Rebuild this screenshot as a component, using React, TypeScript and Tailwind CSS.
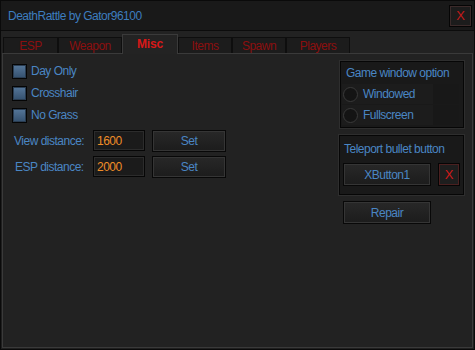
import React from "react";

const blue = "text-[#4a86c4]";

function Btn({ children, className = "" }: { children: React.ReactNode; className?: string }) {
  return (
    <div
      className={`flex items-center justify-center border border-[#080808] bg-gradient-to-b from-[#282828] to-[#1c1c1c] shadow-[inset_0_0_0_1px_#353535] ${blue} ${className}`}
    >
      {children}
    </div>
  );
}

function Check({ label }: { label: string }) {
  return (
    <div className="flex h-[22px] items-center">
      <div className="h-[15px] w-[15px] border border-[#050505] bg-gradient-to-b from-[#56779a] to-[#34506e] shadow-[inset_0_0_0_1px_#2a3d52]" />
      <span className={`ml-[4px] ${blue}`}>{label}</span>
    </div>
  );
}

function Radio({ label }: { label: string }) {
  return (
    <div className="flex h-[20px] items-center">
      <div className="flex h-full w-[91px] items-center bg-[#1c1c1c]">
        <div className="ml-[1px] h-[15px] w-[15px] rounded-full border border-[#3a3a3a] bg-[#141414]" />
        <span className={`ml-[5px] ${blue}`}>{label}</span>
      </div>
      <div className="h-full w-[26px] bg-[#181818]" />
    </div>
  );
}

function Tab({ label, w, active = false }: { label: string; w: string; active?: boolean }) {
  if (active) {
    return (
      <div
        className={`relative z-10 flex h-[20px] ${w} items-center justify-center self-end border border-b-0 border-[#3a3a3a] bg-[#232323] text-[#d81818]`}
      >
        <span className="mt-[-1px] font-bold tracking-[-0.2px]">{label}</span>
      </div>
    );
  }
  return (
    <div
      className={`flex h-[17px] ${w} items-center justify-center self-end border border-[#0e0e0e] bg-[#1c1c1c] text-[#8c0f0f]`}
    >
      {label}
    </div>
  );
}

export default function App() {
  return (
    <div
      className="flex h-[350px] w-[475px] flex-col whitespace-nowrap border border-[#0a0a0a] bg-[#1f1f1f] text-[12px] leading-none tracking-[-0.5px]"
      style={{ fontFamily: '"Liberation Sans", Arial, sans-serif' }}
    >
      {/* title bar */}
      <div className="flex h-[30px] items-center justify-between border-b border-[#0c0c0c] bg-[#191919] pl-[7px] pr-[2px]">
        <span className="text-[#3d7dbf]">DeathRattle by Gator96100</span>
        <div className="flex h-[22px] w-[23px] items-center justify-center border border-[#050505] bg-[#1c1c1c] text-[13px] tracking-normal text-[#c41a1a] shadow-[inset_0_0_0_1px_#3b2a2a]">
          X
        </div>
      </div>

      {/* tab strip */}
      <div className="flex h-[23px] items-end bg-[#222222] pl-[2px]">
        <Tab label="ESP" w="w-[55px]" />
        <Tab label="Weapon" w="w-[64px]" />
        <Tab label="Misc" w="w-[56px]" active />
        <Tab label="Items" w="w-[54px]" />
        <Tab label="Spawn" w="w-[54px]" />
        <Tab label="Players" w="w-[64px]" />
      </div>

      {/* content */}
      <div className="mx-[1px] mb-[1px] -mt-px flex flex-1 border border-[#3a3a3a] bg-[#222222]">
        <div className="flex flex-1 flex-col pl-[9px] pt-[6px]">
          <Check label="Day Only" />
          <Check label="Crosshair" />
          <Check label="No Grass" />
          <div className="mt-[4px] flex h-[21px] items-center">
            <span className={`w-[81px] pl-[2px] ${blue}`}>View distance:</span>
            <div className="flex h-[21px] w-[52px] items-center border border-[#060606] bg-[#1b1b1b] pl-[3px] text-[#ef8d28] shadow-[inset_0_0_0_1px_#2c2c2c]">
              1600
            </div>
            <Btn className="ml-[7px] h-[22px] w-[74px]">Set</Btn>
          </div>
          <div className="mt-[5px] flex h-[21px] items-center">
            <span className={`w-[81px] pl-[3px] ${blue}`}>ESP distance:</span>
            <div className="flex h-[21px] w-[52px] items-center border border-[#060606] bg-[#1b1b1b] pl-[3px] text-[#ef8d28] shadow-[inset_0_0_0_1px_#2c2c2c]">
              2000
            </div>
            <Btn className="ml-[7px] h-[22px] w-[74px]">Set</Btn>
          </div>
        </div>

        <div className="mr-[8px] flex w-[125px] flex-col pt-[7px]">
          <div className="ml-[1px] flex h-[67px] flex-col border border-[#060606] bg-[#191919] px-[1px] shadow-[0_0_0_1px_#2e2e2e]">
            <div className={`flex h-[22px] items-center pl-[4px] ${blue}`}>Game window option</div>
            <Radio label="Windowed" />
            <div className="h-[1px]" />
            <Radio label="Fullscreen" />
          </div>
          <div className="mt-[7px] flex h-[60px] flex-col border border-[#060606] bg-[#191919] shadow-[0_0_0_1px_#2e2e2e]">
            <div className={`flex h-[25px] items-center pl-[4px] ${blue}`}>Teleport bullet button</div>
            <div className="mt-[2px] flex items-center pl-[3px]">
              <Btn className="h-[23px] w-[88px]">XButton1</Btn>
              <div className="ml-[7px] flex h-[23px] w-[22px] items-center justify-center border border-[#050505] bg-[#1e1e1e] text-[13px] tracking-normal text-[#d01a1a] shadow-[inset_0_0_0_1px_#4a2020]">
                X
              </div>
            </div>
          </div>
          <Btn className="ml-[4px] mt-[6px] h-[23px] w-[88px]">Repair</Btn>
        </div>
      </div>
    </div>
  );
}
